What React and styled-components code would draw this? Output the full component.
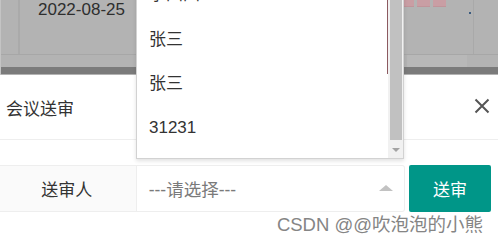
import React from "react";
import styled, { createGlobalStyle } from "styled-components";

const options = ["李四四", "张三", "张三", "31231"];

function App() {
  return (
    <>
      <GlobalStyle />
      <Page>
        {/* table behind the shade */}
        <Backdrop>
          <TableRow>
            <EdgeCell />
            <DateCell>2022-08-25</DateCell>
            <ActionCell>
              <Tags>
                <Tag />
                <Tag />
                <Tag />
              </Tags>
            </ActionCell>
            <EdgeCell />
          </TableRow>
          <SubRow />
          <Band />
        </Backdrop>

        {/* dialog */}
        <Dialog>
          <DialogHeader>
            <DialogTitle>会议送审</DialogTitle>
            <CloseButton aria-label="close">
              <svg width="16" height="16" viewBox="0 0 16 16">
                <path
                  d="M1.5 1.5 L14.5 14.5 M14.5 1.5 L1.5 14.5"
                  stroke="#555"
                  strokeWidth="2"
                  fill="none"
                />
              </svg>
            </CloseButton>
          </DialogHeader>
          <DialogBody>
            <FormRow>
              <FormLabel>送审人</FormLabel>
              <SelectBox>
                <Placeholder>---请选择---</Placeholder>
                <Caret />
              </SelectBox>
              <SubmitButton>送审</SubmitButton>
            </FormRow>
          </DialogBody>
        </Dialog>

        {/* open select list, shown upward */}
        <Dropdown>
          <OptionList>
            {options.map((name, i) => (
              <Option key={i}>{name}</Option>
            ))}
          </OptionList>
          <Scrollbar>
            <Thumb />
            <ScrollArrow />
          </Scrollbar>
        </Dropdown>
        <Sliver />
        <Dot />

        <Watermark>CSDN @@吹泡泡的小熊</Watermark>
      </Page>
    </>
  );
}

// STYLED COMPONENTS

const GlobalStyle = createGlobalStyle`
  body {
    margin: 0;
    background: #fff;
    font-family: "Liberation Sans", "Noto Sans CJK SC", sans-serif;
    color: #333;
  }
`;

const Page = styled.div`
  position: relative;
  width: 498px;
  height: 242px;
  overflow: hidden;
  background: #fff;
`;

const Backdrop = styled.div`
  display: flex;
  flex-direction: column;
  height: 75px;
  background: #b3b3b3;
  border-left: 1px solid #c4c4c4;
`;

const TableRow = styled.div`
  display: grid;
  grid-template-columns: 19px 1fr 72px 25px;
  height: 55px;
  border-bottom: 1px solid #a7a7a7;
  box-sizing: border-box;
`;

const EdgeCell = styled.div`
  border-right: 2px solid #aaaaaa;
  &:last-child {
    border-right: none;
    border-left: 1px solid #a9a9a9;
  }
`;

const DateCell = styled.div`
  padding: 1px 0 0 18px;
  font-size: 17px;
  line-height: 18px;
  color: #2e2e2e;
`;

const ActionCell = styled.div`
  display: flex;
  flex-direction: column;
`;

const Tags = styled.div`
  display: flex;
  gap: 3px;
`;

const Tag = styled.span`
  width: 13px;
  height: 6px;
  background: #c99ea4;
  border-bottom: 1px solid #c0949a;
`;

const SubRow = styled.div`
  height: 12px;
  background: linear-gradient(
    to right,
    #b3b3b3 0,
    #b3b3b3 406px,
    #b8b8b8 406px,
    #b8b8b8 466px,
    #b3b3b3 466px
  );
`;

const Band = styled.div`
  height: 7px;
  background: #7b7b7b;
`;

const Dialog = styled.div`
  display: flex;
  flex-direction: column;
`;

const DialogHeader = styled.div`
  display: flex;
  align-items: center;
  justify-content: space-between;
  height: 64px;
  padding: 0 8px 0 6px;
  border-bottom: 1px solid #eee;
  font-family: "Noto Sans CJK SC", sans-serif;
`;

const DialogTitle = styled.span`
  font-size: 17px;
  color: #333;
  margin-top: 1px;
`;

const CloseButton = styled.span`
  display: flex;
  margin-top: -3px;
`;

const DialogBody = styled.div`
  padding: 25px 7px 0 0;
`;

const FormRow = styled.div`
  display: flex;
  height: 47px;
  font-family: "Noto Sans CJK SC", sans-serif;
  font-size: 17px;
`;

const FormLabel = styled.label`
  display: flex;
  align-items: center;
  justify-content: center;
  width: 137px;
  box-sizing: border-box;
  background: #fafafa;
  border: 1px solid #eee;
  border-left: none;
  color: #333;
  padding-right: 2px;
`;

const SelectBox = styled.div`
  display: flex;
  align-items: center;
  justify-content: space-between;
  width: 269px;
  box-sizing: border-box;
  padding: 0 11px 0 12px;
  border: 1px solid #eee;
  border-left: none;
  border-radius: 0 3px 3px 0;
  background: #fff;
`;

const Placeholder = styled.span`
  color: #7a7a7a;
  font-family: "Liberation Sans", "Noto Sans CJK SC", sans-serif;
  font-size: 17.5px;
`;

const Caret = styled.span`
  width: 0;
  height: 0;
  border-left: 7px solid transparent;
  border-right: 7px solid transparent;
  border-bottom: 6px solid #c2c2c2;
  margin-top: -1px;
`;

const SubmitButton = styled.button`
  margin-left: 4px;
  width: 82px;
  border: none;
  border-radius: 2px;
  background: #009688;
  color: #fff;
  font-family: "Noto Sans CJK SC", sans-serif;
  font-size: 17px;
  cursor: pointer;
`;

const Dropdown = styled.div`
  position: absolute;
  left: 136px;
  bottom: 83px;
  width: 268px;
  box-sizing: border-box;
  display: flex;
  background: #fff;
  border: 1px solid #d2d2d2;
  border-top: none;
  box-shadow: 0 2px 4px rgba(0, 0, 0, 0.12);
`;

const OptionList = styled.dl`
  flex: 1;
  margin: 0;
  padding: 0 0 8px 0;
`;

const Option = styled.dd`
  margin: 0;
  height: 44px;
  line-height: 44px;
  padding-left: 12px;
  font-size: 17px;
  color: #333;
  font-family: "Liberation Sans", "Noto Sans CJK SC", sans-serif;
  &:first-child {
    line-height: 41px;
  }
`;

const Scrollbar = styled.div`
  position: relative;
  width: 15px;
  margin-left: 1px;
  background: #f1f1f1;
  display: flex;
  flex-direction: column;
  align-items: center;
`;

const Thumb = styled.div`
  flex: 1;
  width: 12px;
  margin-bottom: 18px;
  background: #c1c1c1;
`;

const ScrollArrow = styled.span`
  position: absolute;
  bottom: 6px;
  width: 0;
  height: 0;
  border-left: 4px solid transparent;
  border-right: 4px solid transparent;
  border-top: 4px solid #a3a3a3;
`;

const Sliver = styled.span`
  position: absolute;
  left: 387px;
  top: 0;
  width: 1px;
  height: 74px;
  background: #8c5a60;
`;

const Dot = styled.span`
  position: absolute;
  left: 469px;
  top: 12px;
  width: 2px;
  height: 2px;
  background: #3b5b7e;
`;

const Watermark = styled.div`
  position: absolute;
  right: 15px;
  bottom: 6px;
  font-family: "Liberation Sans", "Noto Sans CJK SC", sans-serif;
  font-size: 18.5px;
  color: #858585;
  text-shadow: 0 0 1px rgba(255, 255, 255, 0.8);
  white-space: nowrap;
`;

export default App;
